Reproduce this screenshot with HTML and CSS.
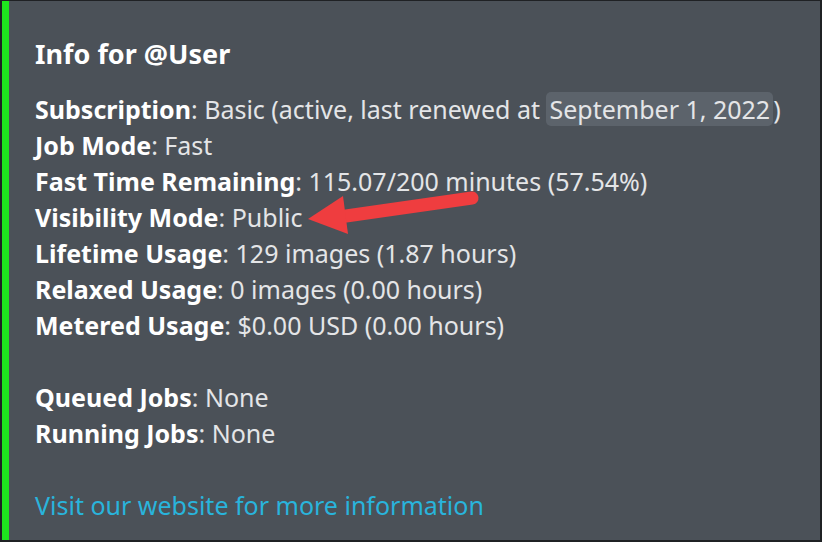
FILE: index.html
```html
<!DOCTYPE html>
<html lang="en">
<head>
<meta charset="UTF-8">
<title>Info for @User</title>
<meta name="viewport" content="width=device-width,initial-scale=1">
<link rel="stylesheet" href="styles.css">
</head>
<body>

<div class="embed">
  <h1>Info for @User</h1>
  <div class="fields">
    <p><b>Subscription</b>: Basic (active, last renewed at <span class="date">September 1, 2022</span>)</p>
    <p><b>Job Mode</b>: Fast</p>
    <p><b>Fast Time Remaining</b>: 115.07/200 minutes (57.54%)</p>
    <p><b>Visibility Mode</b>: Public</p>
    <p><b>Lifetime Usage</b>: 129 images (1.87 hours)</p>
    <p><b>Relaxed Usage</b>: 0 images (0.00 hours)</p>
    <p><b>Metered Usage</b>: $0.00 USD (0.00 hours)</p>
    <p class="gap"><b>Queued Jobs</b>: None</p>
    <p><b>Running Jobs</b>: None</p>
    <p class="gap"><a href="#">Visit our website for more information</a></p>
  </div>
  <svg class="arrow" width="180" height="50" viewBox="0 0 180 50">
    <path d="M40 32 L166 14" stroke="#ef3d3f" stroke-width="13" stroke-linecap="round"/>
    <polygon points="2,35 37,12 42,50" fill="#ef3d3f"/>
  </svg>
</div>

</body>
</html>
```

FILE: styles.css
```css
*{margin:0;padding:0;box-sizing:border-box}
body{background:#1f2124;font-family:"Noto Sans",sans-serif;color:#e4e5e7;padding:1px 2px 2px 2px;height:542px}
.embed{position:relative;height:539px;width:818px;background:#4b5158;border-left:7px solid #1ee51e;padding:36px 0 0 26px}
h1{font-size:27px;font-weight:700;color:#fff;line-height:34px;margin-bottom:20px}
.fields{font-size:25px;line-height:36px}
.fields b{color:#fff;font-weight:700}
.date{background:#5c636b;border-radius:5px;padding:0 3px}
.gap{margin-top:36px}
a{color:#29b4dc;text-decoration:none}
.arrow{position:absolute;left:297px;top:183px}
```
